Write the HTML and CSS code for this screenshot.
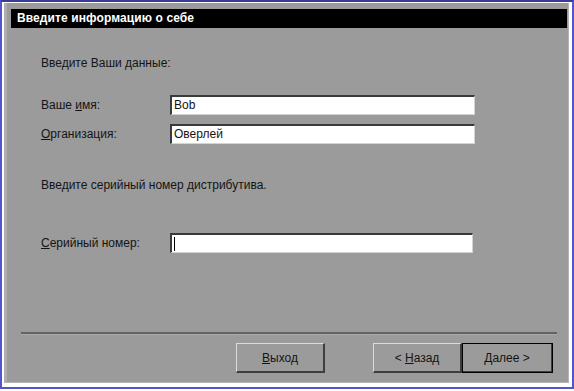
FILE: index.html
```html
<!DOCTYPE html>
<html lang="ru">
<head>
	<meta charset="UTF-8">
	<meta name="viewport" content="width=device-width">
	<title>Введите информацию о себе</title>
	<link rel="stylesheet" href="styles.css">
</head>
<body>
<div class="frame">
	<div class="dialog">
		<div class="title-bar">Введите информацию о себе</div>

		<div class="content">
			<p class="intro">Введите Ваши данные:</p>

			<div class="field first">
				<label for="name">Ваше <u>и</u>мя:</label>
				<div class="edit" id="name">Bob</div>
			</div>
			<div class="field">
				<label for="org"><u>О</u>рганизация:</label>
				<div class="edit" id="org">Оверлей</div>
			</div>

			<p class="serial-intro">Введите серийный номер дистрибутива.</p>

			<div class="field serial">
				<label for="serial"><u>С</u>ерийный номер:</label>
				<div class="edit narrow" id="serial"><span class="caret"></span></div>
			</div>
		</div>

		<hr class="separator">

		<div class="buttons">
			<button class="btn exit"><u>В</u>ыход</button>
			<button class="btn">&lt; <u>Н</u>азад</button>
			<button class="btn default"><u>Д</u>алее &gt;</button>
		</div>
	</div>
</div>
</body>
</html>
```

FILE: styles.css
```css
html, body {
	margin: 0;
	background: #ffffff;
}

body {
	font-family: "Liberation Sans", Arial, sans-serif;
	font-size: 12px;
	color: #141414;
}

.frame {
	box-sizing: border-box;
	width: 574px;
	height: 389px;
	border: 2px solid #5454cc;
	border-top-color: #3a3a9a;
	padding: 1px 3px 4px 2px;
}

.dialog {
	box-sizing: border-box;
	height: 100%;
	background: #9b9b9b;
	border-left: 3px solid #adadad;
	border-bottom: 1px solid #b4b4b4;
	border-right: 1px solid #b4b4b4;
	padding: 6px 1px 0 4px;
}

.title-bar {
	height: 19px;
	line-height: 19px;
	background: #000000;
	color: #ffffff;
	font-weight: bold;
	font-size: 12px;
	padding-left: 6px;
	letter-spacing: 0.1px;
}

.content {
	padding-left: 30px;
}

.intro {
	margin: 28px 0 0;
	line-height: 14px;
}

.field {
	display: flex;
	align-items: center;
	margin-top: 9px;
}

.field.first {
	margin-top: 25px;
}

.field label {
	width: 129px;
	line-height: 14px;
}

.edit {
	box-sizing: border-box;
	width: 305px;
	height: 20px;
	background: #ffffff;
	border-top: 2px solid #3a3a3a;
	border-left: 2px solid #3a3a3a;
	border-right: 1px solid #d4d4d4;
	border-bottom: 1px solid #d4d4d4;
	padding-left: 2px;
	line-height: 17px;
}

.edit.narrow {
	width: 303px;
}

.caret {
	display: inline-block;
	width: 1px;
	height: 14px;
	background: #000000;
	vertical-align: middle;
}

.serial-intro {
	margin: 34px 0 0;
	line-height: 14px;
}

.field.serial {
	margin-top: 41px;
}

.separator {
	margin: 79px 10px 0 10px;
	border: 0;
	border-top: 2px solid #636363;
	border-bottom: 1px solid #a8a8a8;
	height: 0;
}

.buttons {
	display: flex;
	justify-content: flex-end;
	margin: 8px 14px 0 0;
}

.btn {
	box-sizing: border-box;
	width: 89px;
	height: 30px;
	background: #9b9b9b;
	font-family: inherit;
	font-size: 12px;
	color: #141414;
	border: 0;
	border-top: 1px solid #dcdcdc;
	border-left: 1px solid #dcdcdc;
	border-right: 2px solid #3e3e3e;
	border-bottom: 2px solid #3e3e3e;
	padding: 0;
}

.btn.exit {
	margin-right: 48px;
}

.btn.default {
	width: 91px;
	outline: 1px solid #000000;
	outline-offset: -1px;
	border-top-color: #111111;
	border-left-color: #111111;
}
```
